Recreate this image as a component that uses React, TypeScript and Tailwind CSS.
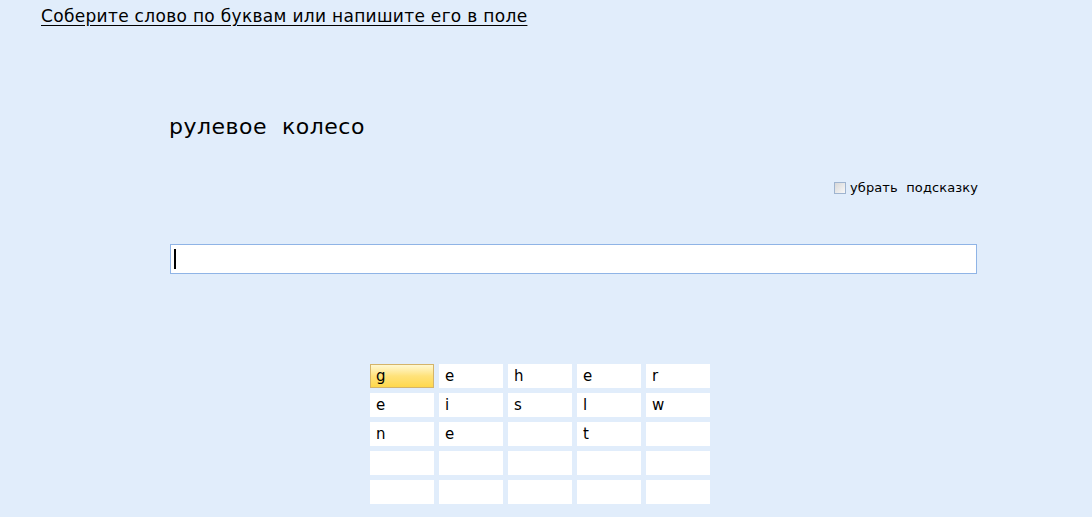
import React from "react";

const rows: string[][] = [
  ["g", "e", "h", "e", "r"],
  ["e", "i", "s", "l", "w"],
  ["n", "e", "", "t", ""],
  ["", "", "", "", ""],
  ["", "", "", "", ""],
];

export default function App() {
  return (
    <div className="w-[1092px] h-[517px] bg-[#e1edfb] overflow-hidden relative" style={{ fontFamily: '"DejaVu Sans", Verdana, sans-serif' }}>
      <div className="pl-[41px] pt-[5px]">
        <span className="text-[17px] leading-[22px] text-black underline underline-offset-[3px] tracking-[0.31px]">
          Соберите слово по буквам или напишите его в поле
        </span>
      </div>
      <div className="pl-[169px] pt-[84px] text-[22px] leading-[28px] text-black whitespace-pre tracking-[0.5px]">
        {"рулевое  колесо"}
      </div>
      <div className="flex justify-end pr-[114px] pt-[39px] items-center">
        <span className="w-[12px] h-[12px] border border-[#9fb4cf] bg-gradient-to-br from-[#d8d8d8] to-[#f8f8f8] mr-[4px]" />
        <span className="text-[13px] leading-[16px] text-black whitespace-pre tracking-[0.1px]">{"убрать  подсказку"}</span>
      </div>
      <div className="pl-[170px] pt-[48px]">
        <div className="w-[807px] h-[30px] bg-white border border-[#8fb4e6] flex items-center pl-[3px]">
          <div className="w-[2px] h-[20px] bg-black" />
        </div>
      </div>
      <div className="pl-[370px] pt-[90px] flex flex-col gap-[5px]">
        {rows.map((r, i) => (
          <div key={i} className="flex gap-[5px]">
            {r.map((c, j) =>
              i === 0 && j === 0 ? (
                <div
                  key={j}
                  className="w-[64px] h-[24px] border border-[#d4b46a] bg-gradient-to-b from-[#fff8d0] via-[#ffe27a] to-[#ffd84a] text-[15px] leading-[22px] pl-[5px] text-black"
                >
                  {c}
                </div>
              ) : (
                <div key={j} className="w-[64px] h-[24px] bg-white text-[15px] leading-[24px] pl-[6px] text-black">
                  {c}
                </div>
              )
            )}
          </div>
        ))}
      </div>
    </div>
  );
}
